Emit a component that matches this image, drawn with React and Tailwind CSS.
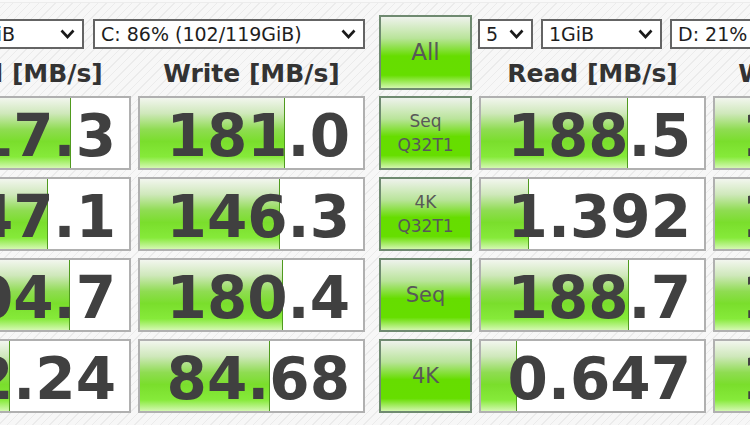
import React from 'react';

const leftWin = {
  labels: [['All'], ['Seq', 'Q32T1'], ['4K', 'Q32T1'], ['Seq'], ['4K']],
  size: '1GiB',
  drive: 'C: 86% (102/119GiB)',
  countW: 'w-[50px]',
  sizeW: 'w-[122px]',
  rows: [
    { read: '117.3', readFill: 165, write: '181.0', writeFill: 145 },
    { read: '147.1', readFill: 142, write: '146.3', writeFill: 140 },
    { read: '104.7', readFill: 164, write: '180.4', writeFill: 143 },
    { read: '12.24', readFill: 104, write: '84.68', writeFill: 130 },
  ],
};

const rightWin = {
  labels: leftWin.labels,
  size: '1GiB',
  drive: 'D: 21% (12/58GiB)',
  countW: 'w-[55px]',
  sizeW: 'w-[121px]',
  rows: [
    { read: '188.5', readFill: 147, write: '180.8', writeFill: 146 },
    { read: '1.392', readFill: 48, write: '147.2', writeFill: 141 },
    { read: '188.7', readFill: 148, write: '182.1', writeFill: 144 },
    { read: '0.647', readFill: 36, write: '1.240', writeFill: 60 },
  ],
};

const Chevron = () => (
  <svg width="15" height="10" viewBox="0 0 15 10" className="shrink-0">
    <polyline points="1.5,1.5 7.5,8 13.5,1.5" fill="none" stroke="#1a1a1a" strokeWidth="2.6" />
  </svg>
);

const Combo = ({ text, className }) => (
  <div className={`h-[30px] border-2 border-[#646464] bg-white flex items-center pl-[6px] pr-[7px] text-[19px] text-[#1e1e1e] leading-none overflow-hidden ${className}`}>
    <span className="flex-1 whitespace-nowrap overflow-hidden">{text}</span>
    <Chevron />
  </div>
);

const TestButton = ({ lines, tall }) => (
  <div
    className={`w-[93px] ${tall ? 'h-[75px]' : 'h-[74px]'} shrink-0 border-2 border-[#6f8a70] bg-[linear-gradient(to_bottom,#eef2ec_0%,#b9e49a_30%,#66dd00_55%,#66de00_82%,#d2f6ae_100%)] flex flex-col items-center justify-center text-[#585858]`}
    style={{ fontFamily: '"DejaVu Sans", sans-serif' }}
  >
    {lines.length === 2 ? (
      <>
        <span className="text-[17px] leading-[24px]">{lines[0]}</span>
        <span className="text-[17px] leading-[24px]">{lines[1]}</span>
      </>
    ) : (
      <span className={`${lines[0] === 'All' ? 'text-[23px]' : 'text-[21px]'} leading-none`}>{lines[0]}</span>
    )}
  </div>
);

const Meter = ({ value, fill }) => (
  <div className="relative w-[227px] h-[74px] shrink-0 border-2 border-[#b0b0b0] bg-white overflow-hidden">
    <div
      className="absolute left-0 top-0 bottom-0 border-r border-[#4f9a1e] bg-[linear-gradient(to_bottom,#f2f6ee_0%,#cfe8bb_22%,#8fdc52_45%,#7ade2c_62%,#86ea3a_84%,#d4f8b2_100%)]"
      style={{ width: fill }}
    />
    <div
      className="relative h-full flex items-center justify-end pr-[13px] pt-[5px] text-[58px] font-bold leading-none text-[#404040]"
      style={{ fontFamily: '"DejaVu Sans", sans-serif' }}
    >
      {value}
    </div>
  </div>
);

const Window = ({ data, comboGap }) => (
  <div className="w-[561px] shrink-0">
    <div className="flex gap-[7px] h-[81px]">
      <TestButton lines={data.labels[0]} tall />
      <div className="flex-1 flex flex-col">
        <div className={`flex mt-[4px] ml-[-1px] ${comboGap}`}>
          <Combo text="5" className={data.countW} />
          <Combo text={data.size} className={data.sizeW} />
          <Combo text={data.drive} className="flex-1" />
        </div>
        <div
          className="flex-1 flex gap-[7px] items-center pt-[3px] text-[25px] font-bold text-[#333]"
          style={{ fontFamily: '"DejaVu Sans", sans-serif' }}
        >
          <div className="w-[227px] text-center whitespace-nowrap">Read [MB/s]</div>
          <div className="w-[227px] text-center whitespace-nowrap">Write [MB/s]</div>
        </div>
      </div>
    </div>
    <div className="flex flex-col gap-[7px]">
      {data.rows.map((r, i) => (
        <div key={i} className="flex gap-[7px]">
          <TestButton lines={data.labels[i + 1]} />
          <Meter value={r.read} fill={r.readFill} />
          <Meter value={r.write} fill={r.writeFill} />
        </div>
      ))}
    </div>
  </div>
);

export default function App() {
  return (
    <div
      className="w-[750px] h-[425px] overflow-hidden bg-[#f6f6f6] bg-[repeating-linear-gradient(135deg,#f7f7f7_0px,#f7f7f7_5px,#ebebeb_5px,#ebebeb_6px)]"
      style={{ fontFamily: '"DejaVu Sans", sans-serif' }}
    >
      <div className="h-[3px] bg-[#f9f9f9] border-b border-[#ececec]" />
      <div className="flex gap-[14px] ml-[-196px] pt-[12px]">
        <Window data={leftWin} comboGap="gap-[9px]" />
        <Window data={rightWin} comboGap="gap-[8px]" />
      </div>
    </div>
  );
}
